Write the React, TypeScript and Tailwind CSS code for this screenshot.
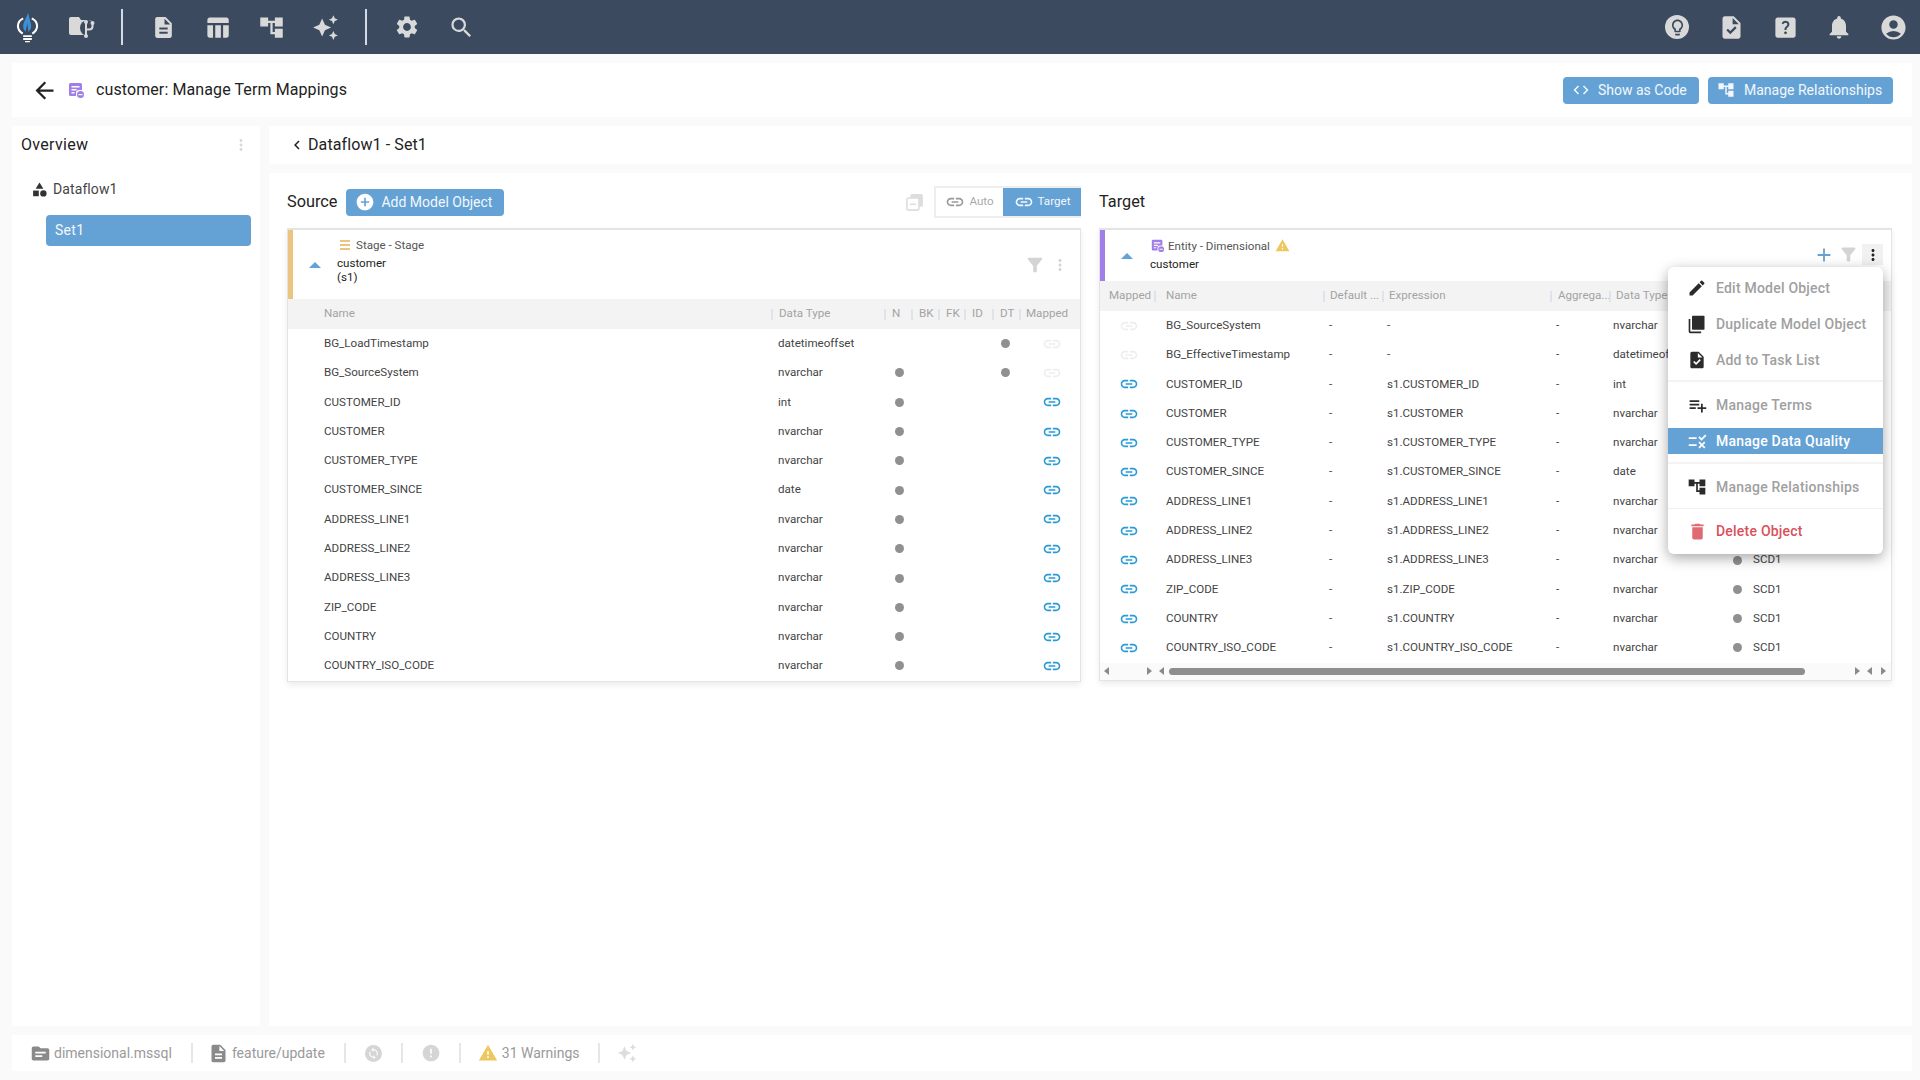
import type { ReactNode } from 'react';
import {
  MdAccountCircle, MdAccountTree, MdAdd, MdAddCircle, MdArrowBack, MdAutoAwesome, MdChevronLeft, MdCode,
  MdDelete, MdDescription, MdEdit, MdError, MdFilterAlt, MdHelpCenter, MdLink, MdMoreVert, MdNotifications,
  MdOutlineLightbulb, MdPlaylistAdd, MdRule, MdSearch, MdSettings, MdSync, MdTableChart, MdTask, MdTopic,
  MdCategory, MdWarning,
} from 'react-icons/md';

const FONT = 'font-[Roboto,sans-serif]';

const sourceRows = [
  ['BG_LoadTimestamp', 'datetimeoffset', false, true, false],
  ['BG_SourceSystem', 'nvarchar', true, true, false],
  ['CUSTOMER_ID', 'int', true, false, true],
  ['CUSTOMER', 'nvarchar', true, false, true],
  ['CUSTOMER_TYPE', 'nvarchar', true, false, true],
  ['CUSTOMER_SINCE', 'date', true, false, true],
  ['ADDRESS_LINE1', 'nvarchar', true, false, true],
  ['ADDRESS_LINE2', 'nvarchar', true, false, true],
  ['ADDRESS_LINE3', 'nvarchar', true, false, true],
  ['ZIP_CODE', 'nvarchar', true, false, true],
  ['COUNTRY', 'nvarchar', true, false, true],
  ['COUNTRY_ISO_CODE', 'nvarchar', true, false, true],
] as const;

const targetRows = [
  ['BG_SourceSystem', '-', 'nvarchar', false],
  ['BG_EffectiveTimestamp', '-', 'datetimeoffset', false],
  ['CUSTOMER_ID', 's1.CUSTOMER_ID', 'int', true],
  ['CUSTOMER', 's1.CUSTOMER', 'nvarchar', true],
  ['CUSTOMER_TYPE', 's1.CUSTOMER_TYPE', 'nvarchar', true],
  ['CUSTOMER_SINCE', 's1.CUSTOMER_SINCE', 'date', true],
  ['ADDRESS_LINE1', 's1.ADDRESS_LINE1', 'nvarchar', true],
  ['ADDRESS_LINE2', 's1.ADDRESS_LINE2', 'nvarchar', true],
  ['ADDRESS_LINE3', 's1.ADDRESS_LINE3', 'nvarchar', true],
  ['ZIP_CODE', 's1.ZIP_CODE', 'nvarchar', true],
  ['COUNTRY', 's1.COUNTRY', 'nvarchar', true],
  ['COUNTRY_ISO_CODE', 's1.COUNTRY_ISO_CODE', 'nvarchar', true],
] as const;

const Logo = () => (
  <svg viewBox="0 0 24 32" className="h-[31px] w-[23px]">
    <path d="M7 22.500C4 20.500 2 18 2 14.500 2 11 4.500 8 7.500 6.500M17 22.500c3-2 5-4.500 5-8 0-3.500-2.500-6.500-5.500-8" fill="none" stroke="#fff" strokeWidth="2.200" />
    <path d="M12.500 0.500C11 6 7.500 10 7.500 15c0 2.500 1.500 4 2.500 5.500l1.800-9 1 9c1.500-1.500 3-3 3-5.500 0-4.500-2-9-3.300-14.500z" fill="#3f8fd6" />
    <path d="M7.500 24h9v2h-9zM7.500 27h9v2h-9zM9.500 30h5v1.500h-5z" fill="#fff" />
  </svg>
);

const GitFolder = () => (
  <svg viewBox="0 0 28 24" className="ml-[4px] h-[24px] w-[28px]">
    <path d="M2 2h8l2 3h9a2 2 0 0 1 2 2v11a2 2 0 0 1-2 2H2a2 2 0 0 1-2-2V4a2 2 0 0 1 2-2z" fill="#d9d9d9" />
    <circle cx="19" cy="13" r="8" fill="#3b4a5f" />
    <path d="M17 7.500V20M23.500 9v2.500c0 2-1.500 3-3.500 3h-3" fill="none" stroke="#d9d9d9" strokeWidth="2" />
    <circle cx="17" cy="7" r="2" fill="#d9d9d9" /><circle cx="23.500" cy="8" r="2" fill="#d9d9d9" /><circle cx="17" cy="21" r="2" fill="#d9d9d9" />
  </svg>
);

const EntityIcon = ({ size = 16 }: { size?: number }) => (
  <svg viewBox="0 0 16 16" width={size} height={size}>
    <path d="M2.500 1h10A1.500 1.500 0 0 1 14 2.500V8h-3a3 3 0 0 0-3 3v3H2.500A1.500 1.500 0 0 1 1 12.500v-10A1.500 1.500 0 0 1 2.500 1z" fill="#a07ee8" />
    <path d="M3.500 4h8v1.500h-8zM3.500 7h5v1.500h-5zM3.500 10h3v1.500h-3z" fill="#fff" />
    <circle cx="12.500" cy="12.500" r="3.500" fill="#a07ee8" />
    <path d="M10.500 12h4v1.200h-4z" fill="#fff" />
  </svg>
);

const DuplicateIcon = () => (
  <svg viewBox="0 0 24 24" width="20" height="20">
    <path d="M7 2h13a1 1 0 0 1 1 1v15a1 1 0 0 1-1 1H7a1 1 0 0 1-1-1V3a1 1 0 0 1 1-1z" fill="#2b2b2b" />
    <path d="M3 6v15a1 1 0 0 0 1 1h13" fill="none" stroke="#2b2b2b" strokeWidth="2" />
  </svg>
);

const CollapseAll = () => (
  <svg viewBox="0 0 20 20" width="21" height="21">
    <path d="M6 5V3.500A1.500 1.500 0 0 1 7.500 2h9A1.500 1.500 0 0 1 18 3.500v9a1.500 1.500 0 0 1-1.500 1.500H15" fill="#dddddd" />
    <rect x="2.750" y="5.750" width="11.500" height="11.500" rx="1.500" fill="#fff" stroke="#dddddd" strokeWidth="1.500" />
    <path d="M5.500 11h6v1.400h-6z" fill="#dddddd" />
  </svg>
);

const Triangle = () => (
  <span className="h-0 w-0 border-x-[6px] border-b-[6px] border-x-transparent border-b-[#64a2d6]" />
);

const Dot = () => <span className="h-[9px] w-[9px] rounded-full bg-[#909090]" />;

const RowLink = ({ on }: { on: boolean }) => (
  <MdLink className={on ? 'text-[#2b9bd8]' : 'text-[#eeeeee]'} size={20} />
);

const TopButton = ({ children }: { children: ReactNode }) => (
  <span className="flex h-[54px] w-[54px] items-center justify-center text-[#d9d9d9]">{children}</span>
);

const BlueButton = ({ icon, label, className }: { icon: ReactNode; label: string; className: string }) => (
  <button className={`flex items-center rounded-[4px] bg-[#64a2d6] text-[14px] text-[#f3f7fb] ${className}`}>
    {icon}
    {label}
  </button>
);

const HeadCell = ({ children, first, className = '' }: { children?: ReactNode; first?: boolean; className?: string }) => (
  <div className={`flex h-full items-center whitespace-nowrap ${className}`}>
    {!first && <span className="mr-[6px] h-[11px] w-[2px] shrink-0 bg-[#dfe4ec]" />}
    {children}
  </div>
);

const MenuItem = ({ icon, label, active, danger }: { icon: ReactNode; label: string; active?: boolean; danger?: boolean }) => (
  <div
    className={`flex h-[26px] items-center text-[14px] font-medium tracking-[0.22px] ${
      active ? 'bg-[#64a2d6] text-white' : danger ? 'text-[#d9505c]' : 'text-[#a0a0a0]'
    }`}
  >
    <span className="flex w-[48px] shrink-0 items-center justify-center pl-[10px]">{icon}</span>
    {label}
  </div>
);

const ContextMenu = () => (
  <div className="absolute right-[8px] top-[37px] z-10 w-[215px] rounded-[6px] bg-white pt-[8px] shadow-[0_4px_14px_rgba(0,0,0,0.35)]">
    <div className="flex flex-col gap-[10px]">
      <MenuItem icon={<MdEdit size={20} className="text-[#2b2b2b]" />} label="Edit Model Object" />
      <MenuItem icon={<DuplicateIcon />} label="Duplicate Model Object" />
      <MenuItem icon={<MdTask size={20} className="text-[#2b2b2b]" />} label="Add to Task List" />
    </div>
    <div className="mb-[10px] mt-[7px] h-[2px] bg-[#f3f3f3]" />
    <MenuItem icon={<MdPlaylistAdd size={21} className="text-[#2b2b2b]" />} label="Manage Terms" />
    <div className="mt-[10px]">
      <MenuItem active icon={<MdRule size={21} className="text-white" />} label="Manage Data Quality" />
    </div>
    <div className="mb-[10px] mt-[8px] h-[2px] bg-[#f3f3f3]" />
    <MenuItem icon={<MdAccountTree size={20} className="text-[#2b2b2b]" />} label="Manage Relationships" />
    <div className="mb-[9px] mt-[8px] h-px bg-[#f0f0f0]" />
    <MenuItem danger icon={<MdDelete size={21} className="text-[#e06a74]" />} label="Delete Object" />
    <div className="h-[10px]" />
  </div>
);

const SourceCard = () => (
  <div className="border border-t-2 border-[#e4e4e4] bg-white shadow-[0_3px_6px_rgba(0,0,0,0.08)]">
    <div className="flex h-[69px] border-l-[5px] border-l-[#ebc57f]">
      <div className="flex w-[44px] items-center justify-center pr-[1px]">
        <Triangle />
      </div>
      <div className="flex-1 pt-[8px] text-[11.6px] leading-[14px]">
        <div className="flex items-center gap-[6px] pl-[3px] text-[#555]">
          <span className="flex w-[10px] flex-col gap-[2px]">
            <span className="h-[2px] bg-[#ebc57f]" />
            <span className="h-[2px] bg-[#ebc57f]" />
            <span className="h-[2px] bg-[#ebc57f]" />
          </span>
          Stage - Stage
        </div>
        <div className="mt-[4px] text-[#222]">customer</div>
        <div className="text-[#222]">(s1)</div>
      </div>
      <div className="flex items-center gap-[5px] pr-[11px] text-[#d4d4d4]">
        <MdFilterAlt size={22} className="ml-[1px]" />
        <MdMoreVert size={18} />
      </div>
    </div>
    <div className="grid h-[30px] grid-cols-[483px_113px_27px_27px_26px_28px_27px_61px] items-center bg-[#f3f3f3] text-[11.6px] text-[#a3a3a3]">
      <HeadCell first className="pl-[36px]">Name</HeadCell>
      <HeadCell>Data Type</HeadCell>
      <HeadCell>N</HeadCell>
      <HeadCell>BK</HeadCell>
      <HeadCell>FK</HeadCell>
      <HeadCell>ID</HeadCell>
      <HeadCell>DT</HeadCell>
      <HeadCell><span className="-ml-[1px]">Mapped</span></HeadCell>
    </div>
    {sourceRows.map(([name, type, n, dt, mapped]) => (
      <div
        key={name}
        className="grid h-[29.3px] grid-cols-[483px_113px_27px_27px_26px_28px_27px_61px] items-center text-[11.6px] text-[#444]"
      >
        <div className="pl-[36px]">{name}</div>
        <div className="pl-[7px]">{type}</div>
        <div className="flex justify-center pl-[4px]">{n && <Dot />}</div>
        <div />
        <div />
        <div />
        <div className="-ml-[1px] flex justify-center">{dt && <Dot />}</div>
        <div className="flex justify-center pl-[5px]">
          <RowLink on={mapped} />
        </div>
      </div>
    ))}
  </div>
);

const TargetCard = () => (
  <div className="relative border border-t-2 border-[#e4e4e4] bg-white shadow-[0_3px_6px_rgba(0,0,0,0.08)]">
    <div className="flex h-[51px] border-l-[5px] border-l-[#a07ee8]">
      <div className="flex w-[45px] items-center justify-center pr-[1px]">
        <Triangle />
      </div>
      <div className="flex-1 pt-[8px] text-[11.6px] leading-[14px]">
        <div className="flex items-center gap-[4px] pl-[1px] text-[#555]">
          <EntityIcon size={13} />
          Entity - Dimensional
          <MdWarning size={15} className="ml-[1px] text-[#edc75f]" />
        </div>
        <div className="mt-[4px] text-[#222]">customer</div>
      </div>
      <div className="flex items-center gap-[3px] pb-[2px] pr-[8px] text-[#d4d4d4]">
        <MdAdd size={22} className="text-[#64a2d6]" />
        <MdFilterAlt size={21} />
        <span className="flex h-[21px] w-[21px] items-center justify-center bg-[#f1f1f1] text-[#222]">
          <MdMoreVert size={18} />
        </span>
      </div>
    </div>
    <div className="grid h-[30px] grid-cols-[54px_169px_59px_168px_59px_122px_162px] items-center bg-[#f3f3f3] text-[11.6px] text-[#a3a3a3]">
      <HeadCell first className="pl-[9px]">Mapped</HeadCell>
      <HeadCell><span className="pl-[4px]">Name</span></HeadCell>
      <HeadCell><span className="-ml-[1px]">Default ...</span></HeadCell>
      <HeadCell><span className="-ml-[1px]">Expression</span></HeadCell>
      <HeadCell>Aggrega...</HeadCell>
      <HeadCell><span className="-ml-[1px]">Data Type</span></HeadCell>
      <HeadCell />
    </div>
    {targetRows.map(([name, expr, type, mapped]) => (
      <div
        key={name}
        className="grid h-[29.3px] grid-cols-[54px_169px_59px_168px_59px_122px_162px] items-center text-[11.6px] text-[#444]"
      >
        <div className="flex justify-center pl-[3px]">
          <RowLink on={mapped} />
        </div>
        <div className="pl-[12px]">{name}</div>
        <div className="pl-[6px]">-</div>
        <div className="pl-[5px]">{expr}</div>
        <div className="pl-[6px]">-</div>
        <div className="pl-[4px]">{type}</div>
        <div className="flex items-center gap-[11px] pl-[2px]">
          <Dot />
          SCD1
        </div>
      </div>
    ))}
    <div className="flex h-[17px] items-center bg-[#fafafa] pl-[4px] pr-[4px]">
      <span className="h-0 w-0 border-y-[4px] border-r-[5px] border-y-transparent border-r-[#8a8a8a]" />
      <span className="ml-[38px] h-0 w-0 border-y-[4px] border-l-[5px] border-y-transparent border-l-[#8a8a8a]" />
      <span className="ml-[7px] h-0 w-0 border-y-[4px] border-r-[5px] border-y-transparent border-r-[#8a8a8a]" />
      <span className="ml-[5px] h-[7px] w-[636px] rounded-full bg-[#8e8e8e]" />
      <span className="ml-[50px] h-0 w-0 border-y-[4px] border-l-[5px] border-y-transparent border-l-[#8a8a8a]" />
      <span className="ml-[7px] h-0 w-0 border-y-[4px] border-r-[5px] border-y-transparent border-r-[#8a8a8a]" />
      <span className="ml-[9px] h-0 w-0 border-y-[4px] border-l-[5px] border-y-transparent border-l-[#8a8a8a]" />
    </div>
    <ContextMenu />
  </div>
);

const StatusSep = () => <div className="h-[20px] w-[2px] bg-[#e6e6e6]" />;

export default function App() {
  return (
    <div className={`flex h-[1080px] w-[1920px] flex-col overflow-hidden bg-[#fafafa] ${FONT}`}>
      <header className="flex h-[54px] shrink-0 items-center justify-between bg-[#3b4a5f]">
        <div className="flex items-center">
          <TopButton><Logo /></TopButton>
          <TopButton><GitFolder /></TopButton>
          <span className="w-[13px]" />
          <span className="h-[36px] w-[2px] bg-[#d5dbe6]" />
          <span className="w-[13px]" />
          <TopButton><MdDescription size={25} /></TopButton>
          <TopButton><MdTableChart size={27} /></TopButton>
          <TopButton><MdAccountTree size={27} /></TopButton>
          <TopButton><MdAutoAwesome size={27} /></TopButton>
          <span className="w-[13px]" />
          <span className="h-[36px] w-[2px] bg-[#d5dbe6]" />
          <span className="w-[13px]" />
          <TopButton><MdSettings size={26} /></TopButton>
          <TopButton><MdSearch size={27} /></TopButton>
        </div>
        <div className="flex items-center">
          <TopButton>
            <span className="flex h-[24px] w-[24px] items-center justify-center rounded-full bg-[#d9d9d9] text-[#3b4a5f]">
              <MdOutlineLightbulb size={19} />
            </span>
          </TopButton>
          <TopButton><MdTask size={27} /></TopButton>
          <TopButton><MdHelpCenter size={27} /></TopButton>
          <TopButton><MdNotifications size={28} /></TopButton>
          <TopButton><MdAccountCircle size={29} /></TopButton>
        </div>
      </header>

      <div className="flex flex-1 flex-col pl-[12px] pr-[8px] pt-[9px]">
        <div className="flex h-[54px] shrink-0 items-center bg-white pl-[19px] pr-[19px]">
          <MdArrowBack size={27} className="text-[#222]" />
          <span className="ml-[10px]"><EntityIcon /></span>
          <span className="ml-[12px] text-[16px] tracking-[0.1px] text-[#222]">customer: Manage Term Mappings</span>
          <div className="ml-auto flex items-center gap-[9px]">
            <BlueButton
              className="h-[27px] w-[136px] pl-[9px]"
              icon={<MdCode size={18} className="mr-[8px]" />}
              label="Show as Code"
            />
            <BlueButton
              className="h-[27px] w-[185px] pl-[9px]"
              icon={<MdAccountTree size={18} className="mr-[9px]" />}
              label="Manage Relationships"
            />
          </div>
        </div>

        <div className="mt-[9px] flex h-[900px] shrink-0 gap-[9px]">
          <aside className="w-[248px] shrink-0 bg-white">
            <div className="flex items-center justify-between pl-[9px] pr-[10px] pt-[7px]">
              <span className="text-[16px] tracking-[0.3px] text-[#222]">Overview</span>
              <MdMoreVert size={18} className="text-[#d9d9d9]" />
            </div>
            <div className="mt-[22px] flex items-center gap-[5px] pl-[19px] text-[14px] tracking-[0.1px] text-[#444]">
              <MdCategory size={17} className="text-[#333]" />
              Dataflow1
            </div>
            <div className="ml-[34px] mt-[15px] flex h-[31px] w-[205px] items-center rounded-[4px] bg-[#64a2d6] pl-[9px] text-[14px] tracking-[0.3px] text-[#f3f7fb]">
              Set1
            </div>
          </aside>

          <main className="flex min-w-0 flex-1 flex-col gap-[9px]">
            <div className="flex h-[38px] shrink-0 items-center bg-white pl-[20px] text-[16px] tracking-[0.1px] text-[#222]">
              <MdChevronLeft size={18} className="-ml-[1px] mr-[2px] text-[#222]" />
              Dataflow1 - Set1
            </div>
            <div className="grid flex-1 grid-cols-[794px_793px] content-start gap-x-[18px] bg-white pl-[18px] pt-[13px]">
              <div>
                <div className="flex h-[32px] items-center">
                  <span className="text-[16.3px] text-[#222]">Source</span>
                  <BlueButton
                    className="ml-[9px] h-[27px] w-[158px] pl-[9px]"
                    icon={<MdAddCircle size={20} className="mr-[6px] text-white" />}
                    label="Add Model Object"
                  />
                  <span className="ml-auto mr-[9px]"><CollapseAll /></span>
                  <div className="flex h-[32px] w-[147px] border-y-2 border-l-2 border-[#eeeeee] text-[11.6px]">
                    <span className="flex flex-1 items-center justify-center gap-[4px] text-[#aaaaaa]">
                      <MdLink size={20} className="text-[#999]" />
                      Auto
                    </span>
                    <span className="flex w-[78px] items-center justify-center gap-[4px] bg-[#64a2d6] text-[#f3f7fb]">
                      <MdLink size={20} />
                      Target
                    </span>
                  </div>
                </div>
                <div className="mt-[10px]"><SourceCard /></div>
              </div>
              <div>
                <div className="flex h-[32px] items-center text-[16.3px] text-[#222]">Target</div>
                <div className="mt-[10px]"><TargetCard /></div>
              </div>
            </div>
          </main>
        </div>

        <footer className="mt-[9px] flex h-[36px] shrink-0 items-center bg-white pl-[18px] text-[14px] text-[#9a9a9a]">
          <MdTopic size={21} className="text-[#8a8a8a]" />
          <span className="ml-[3px]">dimensional.mssql</span>
          <span className="ml-[19px]"><StatusSep /></span>
          <MdDescription size={21} className="ml-[15px] text-[#8a8a8a]" />
          <span className="ml-[3px]">feature/update</span>
          <span className="ml-[19px]"><StatusSep /></span>
          <span className="ml-[19px] flex h-[17px] w-[17px] items-center justify-center rounded-full bg-[#d5d5d5] text-white">
            <MdSync size={13} />
          </span>
          <span className="ml-[19px]"><StatusSep /></span>
          <MdError size={20} className="ml-[18px] text-[#d5d5d5]" />
          <span className="ml-[18px]"><StatusSep /></span>
          <MdWarning size={20} className="ml-[17px] text-[#edc75f]" />
          <span className="ml-[4px]">31 Warnings</span>
          <span className="ml-[18px]"><StatusSep /></span>
          <MdAutoAwesome size={20} className="ml-[17px] text-[#dddddd]" />
        </footer>
      </div>
    </div>
  );
}
